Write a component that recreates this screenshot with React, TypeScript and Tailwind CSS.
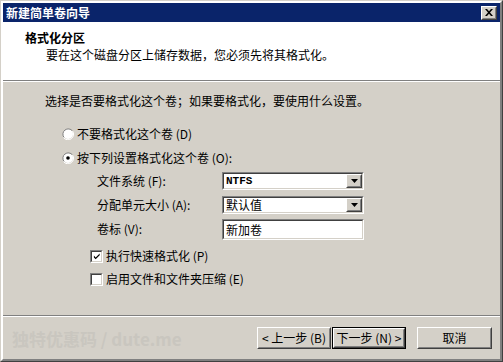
import React from "react";

const font = { fontFamily: '"Noto Sans CJK SC", "Noto Sans", sans-serif' };

function Raised({ children, className = "" }: { children?: React.ReactNode; className?: string }) {
  return (
    <div className={"border border-t-white border-l-white border-r-[#404040] border-b-[#404040] " + className}>
      <div className="w-full h-full border border-t-[#d4d0c8] border-l-[#d4d0c8] border-r-[#808080] border-b-[#808080] flex items-center justify-center">
        {children}
      </div>
    </div>
  );
}

function Sunken({ children, className = "" }: { children?: React.ReactNode; className?: string }) {
  return (
    <div className={"border border-t-[#808080] border-l-[#808080] border-r-white border-b-white " + className}>
      <div className="w-full h-full border border-t-[#404040] border-l-[#404040] border-r-[#d4d0c8] border-b-[#d4d0c8] bg-white flex items-center">
        {children}
      </div>
    </div>
  );
}

function Select({ value, mono }: { value: string; mono?: boolean }) {
  return (
    <Sunken className="w-[142px] h-[18px]">
      <span
        className={"flex-1 pl-[2px] text-black leading-none " + (mono ? "text-[11px]" : "text-[12px]")}
        style={mono ? { fontFamily: '"Liberation Mono", monospace', fontWeight: 700 } : undefined}
      >
        {value}
      </span>
      <Raised className="w-[16px] h-[14px] bg-[#d4d0c8]">
        <svg width="7" height="4" viewBox="0 0 7 4">
          <path d="M0 0h7L3.5 4z" fill="#000" />
        </svg>
      </Raised>
    </Sunken>
  );
}

function Radio({ checked }: { checked?: boolean }) {
  return (
    <svg width="12" height="12" viewBox="0 0 12 12">
      <circle cx="6" cy="6" r="5" fill="#fff" />
      <path d="M10.5 3A5 5 0 0 0 2 9.5" fill="none" stroke="#808080" strokeWidth="1" />
      <path d="M1.5 9.5A5.5 5.5 0 0 0 10.5 3" fill="none" stroke="#fff" strokeWidth="1" />
      {checked && <circle cx="6" cy="6" r="1.8" fill="#000" />}
    </svg>
  );
}

function Check({ checked }: { checked?: boolean }) {
  return (
    <Sunken className="w-[13px] h-[13px]">
      {checked && (
        <svg width="9" height="9" viewBox="0 0 9 9" className="ml-[1px]">
          <path d="M1 3.5l2 2 4.5-4.5v2L3 7.5 1 5.5z" fill="#000" />
        </svg>
      )}
    </Sunken>
  );
}

export default function App() {
  return (
    <div className="w-[503px] h-[362px] bg-[#d4d0c8] text-[12px] text-black" style={font}>
      <div className="w-full h-full border border-t-[#d4d0c8] border-l-[#d4d0c8] border-r-[#404040] border-b-[#404040]">
        <div className="w-full h-full border-2 border-t-white border-l-white border-r-[#808080] border-b-[#808080] flex flex-col">
          {/* title bar */}
          <div className="h-[19px] bg-[#0a246a] flex items-center pl-[3px] pr-[3px] shrink-0">
            <span className="flex-1 text-white font-bold text-[12px] leading-none">新建简单卷向导</span>
            <Raised className="w-[16px] h-[14px] bg-[#d4d0c8]">
              <svg width="8" height="7" viewBox="0 0 8 7">
                <path d="M0 0h2l2 2.2L6 0h2L5 3.5 8 7H6L4 4.8 2 7H0l3-3.5z" fill="#000" />
              </svg>
            </Raised>
          </div>
          {/* header */}
          <div className="h-[58px] bg-white shrink-0 pt-[9px] pl-[22px]">
            <div className="font-bold leading-[14px]">格式化分区</div>
            <div className="pl-[21px] mt-[2px] leading-[16px]">要在这个磁盘分区上储存数据，您必须先将其格式化。</div>
          </div>
          <div className="h-px bg-[#808080] shrink-0" />
          <div className="h-px bg-white shrink-0" />
          {/* body */}
          <div className="h-[233px] shrink-0 flex flex-col pl-[42px] pt-[11px]">
            <div className="leading-[16px]">选择是否要格式化这个卷；如果要格式化，要使用什么设置。</div>
            <div className="flex items-center gap-[3px] ml-[17px] mt-[17px] h-[16px]">
              <Radio />
              <span>不要格式化这个卷 (D)</span>
            </div>
            <div className="flex items-center gap-[3px] ml-[17px] mt-[8px] h-[16px]">
              <Radio checked />
              <span>按下列设置格式化这个卷 (O):</span>
            </div>
            <div className="grid grid-cols-[125px_142px] ml-[52px] mt-[6px] gap-y-[6px] items-center">
              <span className="leading-[16px]">文件系统 (F):</span>
              <Select value="NTFS" mono />
              <span className="leading-[16px]">分配单元大小 (A):</span>
              <Select value="默认值" />
              <span className="leading-[16px] -mt-[2px]">卷标 (V):</span>
              <Sunken className="w-[142px] h-[21px] -mt-[1px]">
                <span className="pl-[2px] leading-none">新加卷</span>
              </Sunken>
            </div>
            <div className="flex items-center gap-[3px] ml-[45px] mt-[8px] h-[16px]">
              <Check checked />
              <span>执行快速格式化 (P)</span>
            </div>
            <div className="flex items-center gap-[3px] ml-[45px] mt-[7px] h-[16px]">
              <Check />
              <span>启用文件和文件夹压缩 (E)</span>
            </div>
          </div>
          <div className="h-px bg-[#808080] shrink-0" />
          <div className="h-px bg-white shrink-0" />
          {/* footer */}
          <div className="flex-1 flex items-center pl-[9px] pr-[8px]">
            <span className="flex-1 text-[17px] font-bold text-[#c9c6bf] leading-none">独特优惠码 / dute.me</span>
            <Raised className="w-[74px] h-[22px] bg-[#d4d0c8]">
              <span className="leading-none">&lt; 上一步 (B)</span>
            </Raised>
            <div className="w-[74px] h-[22px] border border-black ml-[1px]">
              <Raised className="w-full h-full bg-[#d4d0c8]">
                <span className="leading-none">下一步 (N) &gt;</span>
              </Raised>
            </div>
            <Raised className="w-[75px] h-[22px] bg-[#d4d0c8] ml-[11px]">
              <span className="leading-none">取消</span>
            </Raised>
          </div>
        </div>
      </div>
    </div>
  );
}
